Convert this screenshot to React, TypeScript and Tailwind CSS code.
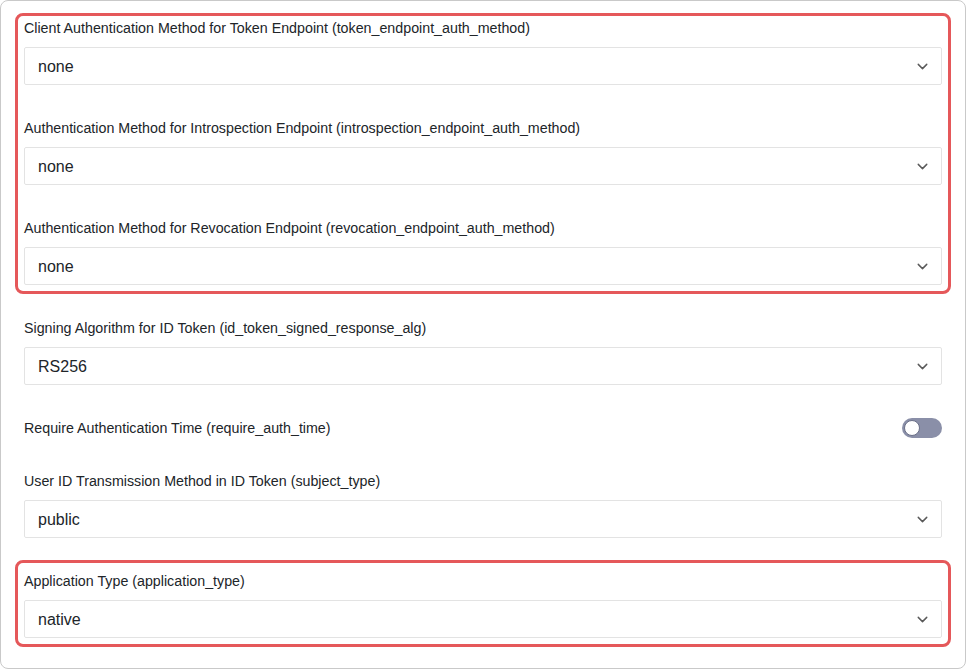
import React from 'react';
import { ChevronDown } from 'lucide-react';

type Field = { label: string; value: string };

function SelectField({ label, value }: Field) {
  return (
    <div className="flex flex-col">
      <label className="h-5 text-[14.25px] leading-5 text-[#212529] mb-[9px]">{label}</label>
      <div className="h-[38px] border border-[#e3e3e3] rounded-[2px] bg-white flex items-center justify-between pl-[13px] pr-[10px]">
        <span className="text-[16px] text-[#212529] pt-[2px]">{value}</span>
        <ChevronDown size={17} strokeWidth={2} className="text-[#5a5a5a]" />
      </div>
    </div>
  );
}

export default function App() {
  const authFields: Field[] = [
    { label: 'Client Authentication Method for Token Endpoint (token_endpoint_auth_method)', value: 'none' },
    { label: 'Authentication Method for Introspection Endpoint (introspection_endpoint_auth_method)', value: 'none' },
    { label: 'Authentication Method for Revocation Endpoint (revocation_endpoint_auth_method)', value: 'none' },
  ];

  return (
    <div className="w-[966px] h-[670px] bg-white" style={{ fontFamily: '"Liberation Sans", Arial, sans-serif' }}>
      <div className="w-[966px] h-[669px] border border-[#c9c9c9] rounded-[8px] px-[23px] pt-[12px] overflow-hidden">
        {/* highlighted group */}
        <div className="-mx-[9px] border-[3px] border-[#e5585a] rounded-[8px] px-[6px] pt-[2px] pb-[6px] flex flex-col gap-[33px]">
          {authFields.map((f) => (
            <SelectField key={f.label} {...f} />
          ))}
        </div>

        <div className="mt-[24px] flex flex-col gap-[33px]">
          <SelectField label="Signing Algorithm for ID Token (id_token_signed_response_alg)" value="RS256" />

          <div className="h-5 flex items-center justify-between">
            <span className="text-[14.25px] leading-5 text-[#212529]">Require Authentication Time (require_auth_time)</span>
            <div className="w-10 h-5 rounded-full bg-[#8a8fa8] flex items-center pl-[2px]">
              <div className="w-4 h-4 rounded-full bg-white border-[1.5px] border-[#6b7088]" />
            </div>
          </div>

          <SelectField label="User ID Transmission Method in ID Token (subject_type)" value="public" />
        </div>

        <div className="mt-[22px] -mx-[9px] border-[3px] border-[#e5585a] rounded-[8px] px-[6px] pt-[8px] pb-[6px]">
          <SelectField label="Application Type (application_type)" value="native" />
        </div>
      </div>
    </div>
  );
}
